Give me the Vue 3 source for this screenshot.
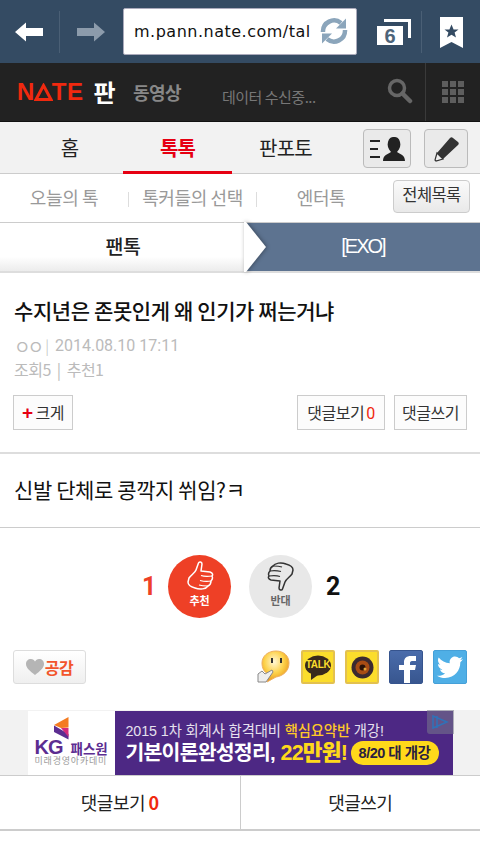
<script setup>
const mainTabs = [
  { label: '홈', on: false },
  { label: '톡톡', on: true },
  { label: '판포토', on: false },
]
const thumb = 'M3 17C5 14 9 12 10 9L12.500 2C13 .5 16 .5 16 3L15 10 24 11C27 12 27 14 26 15C27 17 26 19 25 20C25 22 24 24 22 25C20 28 14 29 9 27C5 26 2 24 2 21Z'
const fingers = 'M15 14.500C18 15.500 22 15.500 26 15M14 19.500C18 20.500 22 20.500 25 20M13 24C16 25 19 25 22 25'
</script>

<template>
  <div class="page">
    <header class="browser">
      <div class="nav-btn">
        <svg width="32" height="22" viewBox="0 0 32 22"><path d="M1 11 12 1.500V7H29V15H12V20.500Z" fill="#fff" /></svg>
      </div>
      <div class="nav-btn fwd">
        <svg width="32" height="22" viewBox="0 0 32 22"><path d="M31 11 20 1.500V7H3V15H20V20.500Z" fill="#8c9bab" /></svg>
      </div>
      <div class="address">
        <span class="url">m.pann.nate.com/tal</span>
        <svg class="reload" width="28" height="28" viewBox="0 0 28 28">
          <g>
            <path d="M3 15A11 11 0 0 1 21 6" fill="none" stroke="#8ba5bb" stroke-width="4.500" />
            <path d="M26 1.500V11.500H16Z" fill="#8ba5bb" />
          </g>
          <g transform="rotate(180 14 14)">
            <path d="M3 15A11 11 0 0 1 21 6" fill="none" stroke="#8ba5bb" stroke-width="4.500" />
            <path d="M26 1.500V11.500H16Z" fill="#8ba5bb" />
          </g>
        </svg>
      </div>
      <div class="tabs-btn">
        <svg width="36" height="28" viewBox="0 0 36 28"><path d="M8 1H35V20H32V4H8Z" fill="#fff" /><rect x="1" y="8" width="26" height="19" fill="#fff" /></svg>
        <span class="tab-count">6</span>
      </div>
      <div class="mark-btn">
        <svg width="23" height="31" viewBox="0 0 23 31"><path d="M0 0H23V31L11.500 25 0 31Z" fill="#fff" /><path d="M11.500 7.500 13.600 12.500H18.500L14.600 15.600 16 20.500 11.500 17.700 7 20.500 8.400 15.600 4.500 12.500H9.400Z" fill="#344b63" /></svg>
      </div>
    </header>

    <div class="nate-bar">
      <div class="logo">
        <span class="nate">N<svg class="delta" width="19" height="18" viewBox="0 0 19 18"><path d="M9.500 2.500 17 16.500H2Z" fill="none" stroke="#f0290f" stroke-width="3" /></svg>TE</span>
        <span class="pan">판</span>
      </div>
      <span class="video">동영상</span>
      <span class="ticker">데이터 수신중...</span>
      <svg class="search" width="26" height="26" viewBox="0 0 26 26"><circle cx="10" cy="10" r="7.500" fill="none" stroke="#666" stroke-width="3.500" /><path d="M15.500 15.500 23 23" stroke="#666" stroke-width="4.500" stroke-linecap="round" /></svg>
      <div class="grid-btn">
        <i v-for="n in 9" :key="n"></i>
      </div>
    </div>

    <nav class="main-tabs">
      <a v-for="t in mainTabs" :key="t.label" class="main-tab" :class="{ on: t.on }">{{ t.label }}</a>
      <div class="tool-btns">
        <span class="tool wide">
          <svg width="36" height="26" viewBox="0 0 36 26">
            <path d="M1 5H11M1 13H9M1 21H11" stroke="#222" stroke-width="2" />
            <path d="M14 25C14 19 19 18 22 16C19 13 18 9 19 6C20 2 22 1 25 1C28 1 30 2 31 6C32 9 31 13 28 16C31 18 36 19 36 25Z" fill="#222" />
          </svg>
        </span>
        <span class="tool">
          <svg width="26" height="26" viewBox="0 0 26 26">
            <path d="M17 2C18 1 19 1 20 2L25 6C26 7 26 8 25 9L10 23 3 25 2 24 4 17Z" fill="#333" />
            <path d="M4 17 10 23 3 25 2 24Z" fill="#eee" stroke="#333" stroke-width="1.200" />
          </svg>
        </span>
      </div>
    </nav>

    <nav class="sub-tabs">
      <a class="sub first">오늘의 톡</a>
      <i class="sub-sep"></i>
      <a class="sub second">톡커들의 선택</a>
      <i class="sub-sep"></i>
      <a class="sub third">엔터톡</a>
      <span class="all-btn">전체목록</span>
    </nav>

    <div class="crumbs">
      <div class="crumb-left">팬톡</div>
      <div class="crumb-right">[EXO]</div>
      <svg class="crumb-arrow" width="22" height="50" viewBox="0 0 22 50"><path d="M0 0 20 25 0 50H-2V0Z" fill="#fff" /></svg>
    </div>

    <article class="post">
      <h1 class="title">수지년은 존못인게 왜 인기가 쩌는거냐</h1>
      <div class="meta"><span class="nick">ㅇㅇ</span><span class="bar">|</span><span class="date">2014.08.10 17:11</span></div>
      <div class="stats">조회5<span class="bar2">|</span>추천1</div>
      <div class="actions">
        <span class="box small"><b class="plus">+</b>크게</span>
        <span class="spacer"></span>
        <span class="box view">댓글보기<em>0</em></span>
        <span class="box write">댓글쓰기</span>
      </div>
    </article>

    <section class="body">신발 단체로 콩깍지 쒸임?ㅋ</section>

    <section class="votes">
      <span class="count red">1</span>
      <div class="vote up">
        <svg width="28" height="30" viewBox="0 0 28 30">
          <path :d="thumb" fill="none" stroke="#fff" stroke-width="1.500" stroke-linejoin="round" />
          <path :d="fingers" fill="none" stroke="#fff" stroke-width="1.200" />
        </svg>
        <span>추천</span>
      </div>
      <div class="vote down">
        <svg width="28" height="30" viewBox="0 0 28 30">
          <g transform="rotate(180 14 15)">
            <path :d="thumb" fill="none" stroke="#333" stroke-width="1.500" stroke-linejoin="round" />
            <path :d="fingers" fill="none" stroke="#333" stroke-width="1.200" />
          </g>
        </svg>
        <span>반대</span>
      </div>
      <span class="count">2</span>
    </section>

    <section class="share">
      <span class="like">
        <svg width="18" height="16" viewBox="0 0 18 16"><path d="M9 16C4 12 0 9 0 5C0 2 2 0 5 0C7 0 8 1 9 2.500C10 1 11 0 13 0C16 0 18 2 18 5C18 9 14 12 9 16Z" fill="#b5b5b5" /></svg>공감
      </span>
      <span class="spacer"></span>
      <svg class="bubble" width="33" height="34" viewBox="0 0 33 34">
        <defs>
          <radialGradient id="bub" cx="0.450" cy="0.350" r="0.650"><stop offset="0" stop-color="#fff8d8" /><stop offset="0.550" stop-color="#fdd24a" /><stop offset="1" stop-color="#e8951c" /></radialGradient>
        </defs>
        <path d="M19 1C27 1 32 6 32 13C32 21 26 26 19 27L10 32 11 24C7 22 5 18 5 13C5 6 11 1 19 1Z" fill="url(#bub)" stroke="#eeb060" />
        <rect x="14" y="8" width="2" height="5" fill="#333" /><rect x="23" y="8" width="2" height="5" fill="#333" />
        <path d="M1 24 5 21 8 24 15 20 16 22 9 32H1Z" fill="#eee" stroke="#888" />
      </svg>
      <span class="sns kakao">
        <svg width="26" height="25" viewBox="0 0 26 25"><ellipse cx="13" cy="10.500" rx="13" ry="10" fill="#3a2a1c" /><path d="M6 17 6 25 13 20Z" fill="#3a2a1c" /></svg>
        <b>TALK</b>
      </span>
      <span class="sns story">
        <svg width="23" height="23" viewBox="0 0 23 23"><circle cx="11.500" cy="11.500" r="11" fill="#3b2a30" /><circle cx="11.500" cy="11.500" r="7" fill="#a84c14" /><circle cx="11.500" cy="11.500" r="3" fill="#2a1208" /><circle cx="14" cy="13" r="1.500" fill="#e3a53a" /></svg>
      </span>
      <span class="sns fb">
        <svg width="20" height="27" viewBox="0 0 20 27"><path d="M6 27V14H1V9H6V6C6 2 9 0 12.500 0H18V5H14C12.500 5 12 6 12 7V9H18L17 14H12V27Z" fill="#fff" /></svg>
      </span>
      <span class="sns tw">
        <svg width="26" height="22" viewBox="0 0 26 22"><path d="M26 3C25 3.500 24 4 23 4C24 3.300 25 2 25.300 1C24.300 1.600 23.200 2 22 2.300C21 1.200 19.600 .5 18 .5C15 .5 12.600 3 12.600 6C12.600 6.400 12.700 6.800 12.800 7.200C8.300 7 4.300 4.800 1.700 1.500C1.200 2.300 1 3.300 1 4.200C1 6.100 2 7.700 3.400 8.700C2.500 8.700 1.700 8.400 1 8C1 10.800 2.900 13 5.400 13.500C4.500 13.800 3.700 13.800 3 13.600C3.700 15.800 5.700 17.400 8.100 17.400C5.800 19.200 3 20 0 19.700C2.400 21.200 5.200 22 8.200 22C18 22 23.300 13.900 23.300 6.800V6.200C24.400 5.400 25.300 4.300 26 3Z" fill="#fff" /></svg>
      </span>
    </section>

    <aside class="ad-band">
      <div class="ad">
        <div class="ad-logo">
          <svg class="kg-mark" width="15" height="23" viewBox="0 0 15 23"><path d="M0 8 14.500 0V10.500L7 11Z" fill="#f47b20" /><path d="M0 8.500V15L14.500 22.500V17Z" fill="#5c2d91" /><path d="M7 11H14.500V20Z" fill="#d42a7c" /></svg>
          <div class="kg-row"><b>KG</b><span>패스원</span></div>
          <div class="academy">미래경영아카데미</div>
        </div>
        <div class="ad-main">
          <div class="ad-top">2015 1차 회계사 합격대비 <b>핵심요약반</b> 개강!</div>
          <div class="ad-bottom"><span class="ad-head">기본이론완성정리,</span><b>22만원!</b><span class="pill">8/20 대 개강</span></div>
        </div>
        <span class="ad-mark">
          <svg width="18" height="16" viewBox="0 0 18 16"><path d="M2 2 16 8 2 14Z M6 2V14" fill="none" stroke="#2f72b8" stroke-width="1.500" /></svg>
        </span>
      </div>
    </aside>

    <div class="bottom-btns">
      <a class="bottom">댓글보기 <em>0</em></a>
      <a class="bottom">댓글쓰기</a>
    </div>
  </div>
</template>

<style>
html, body { margin: 0; background: #fff; }
</style>

<style scoped>
.page {
  width: 480px;
  height: 853px;
  overflow: hidden;
  background: #fff;
  font-family: "Noto Sans CJK KR", "Liberation Sans", sans-serif;
  color: #222;
}
a, em, i, b { font-style: normal; }

/* browser chrome */
.browser {
  height: 63px;
  box-sizing: border-box;
  background: #344b63;
  display: flex;
  align-items: center;
}
.nav-btn {
  width: 60px;
  height: 42px;
  margin-top: 1px;
  display: flex;
  align-items: center;
  justify-content: center;
  border-right: 1px solid #4a5f75;
  box-sizing: border-box;
}
.nav-btn.fwd { border-right: 0; }
.address {
  width: 234px;
  height: 47px;
  margin-left: 3px;
  box-sizing: border-box;
  background: #fff;
  border-radius: 2px;
  border: 1px solid #aab;
  display: flex;
  align-items: center;
  padding-left: 10px;
  position: relative;
  overflow: hidden;
}
.url {
  font-family: "DejaVu Sans", sans-serif;
  font-size: 16px;
  letter-spacing: 0.5px;
  color: #111;
  white-space: nowrap;
}
.reload { position: absolute; right: 8px; top: 8px; }
.tabs-btn {
  position: relative;
  width: 36px;
  height: 28px;
  margin-left: 19px;
  margin-top: 1px;
}
.tab-count {
  position: absolute;
  left: 1px;
  top: 8px;
  width: 26px;
  text-align: center;
  font: 700 20px/20px "Liberation Sans", sans-serif;
  color: #4d6479;
}
.mark-btn {
  width: 59px;
  height: 42px;
  margin-left: 9px;
  margin-top: 1px;
  border-left: 1px solid #4a5f75;
  box-sizing: border-box;
  display: flex;
  align-items: center;
  justify-content: center;
}

/* nate bar */
.nate-bar {
  height: 59px;
  box-sizing: border-box;
  background: #222;
  border-bottom: 1px solid #111;
  display: flex;
  align-items: center;
  padding-left: 17px;
  position: relative;
}
.logo { display: flex; align-items: center; gap: 10px; width: 116px; }
.nate {
  display: inline-flex;
  align-items: center;
  font: 700 24px/24px "Liberation Sans", sans-serif;
  letter-spacing: 0.5px;
  color: #f0290f;
}
.delta { margin: 0 -1px 0 -1px; }
.pan { font-size: 24px; font-weight: 700; color: #fff; line-height: 28px; }
.video { font-size: 18px; font-weight: 700; color: #888; letter-spacing: -0.5px; width: 89px; }
.ticker { font-size: 15px; color: #777; letter-spacing: -0.5px; width: 161px; margin-top: 9px; }
.search { margin-top: -2px; margin-left: 4px; }
.grid-btn {
  position: absolute;
  right: 0;
  top: 0;
  width: 55px;
  height: 58px;
  border-left: 1px solid #3a3a3a;
  box-sizing: border-box;
  display: grid;
  grid-template-columns: repeat(3, 6px);
  grid-auto-rows: 6px;
  gap: 2px;
  align-content: center;
  justify-content: center;
}
.grid-btn i { background: #5e5e5e; }

/* main tabs */
.main-tabs {
  height: 52px;
  box-sizing: border-box;
  background: #f2f2f2;
  border-bottom: 1px solid #ccc;
  display: flex;
  position: relative;
  padding-left: 16px;
}
.main-tab {
  width: 107px;
  height: 52px;
  box-sizing: border-box;
  padding-top: 11px;
  font-size: 20px;
  line-height: 30px;
  text-align: center;
  letter-spacing: -0.8px;
  color: #222;
}
.main-tab.on { color: #e60012; font-weight: 700; border-bottom: 3px solid #e60012; width: 109px; }
.tool-btns {
  margin-left: auto;
  margin-right: 12px;
  margin-top: 7px;
  display: flex;
  gap: 13px;
}
.tool {
  height: 39px;
  width: 44px;
  box-sizing: border-box;
  border: 1px solid #bbb;
  border-radius: 4px;
  background: #eaeaea;
  display: flex;
  align-items: center;
  justify-content: center;
}
.tool.wide { width: 48px; }

/* sub tabs */
.sub-tabs {
  height: 49px;
  box-sizing: border-box;
  border-bottom: 1px solid #ccc;
  padding-bottom: 3px;
  display: flex;
  align-items: center;
  position: relative;
  font-size: 18px;
  color: #999;
  letter-spacing: -0.4px;
}
.sub { text-align: center; }
.first { width: 128px; }
.second { width: 127px; }
.third { width: 128px; }
.sub-sep { width: 1px; height: 15px; background: #ddd; margin-top: 6px; }
.all-btn {
  width: 77px;
  height: 33px;
  box-sizing: border-box;
  border: 1px solid #ccc;
  border-radius: 4px;
  background: linear-gradient(#fafafa, #e9e9e9);
  color: #333;
  font-size: 16.500px;
  letter-spacing: -0.6px;
  line-height: 27px;
  text-align: center;
  margin-left: 8px;
  white-space: nowrap;
}

/* breadcrumb */
.crumbs {
  height: 50px;
  box-sizing: border-box;
  display: flex;
  position: relative;
  border-bottom: 2px solid #ddd;
}
.crumb-left {
  width: 246px;
  background: linear-gradient(#fff 70%, #ececec);
  font-size: 19.500px;
  font-weight: 500;
  line-height: 46px;
  text-align: center;
  color: #222;
  letter-spacing: -0.5px;
}
.crumb-right {
  flex: 1;
  background: #5d7390;
  color: #fff;
  font: 20px/46px "Liberation Sans", sans-serif;
  letter-spacing: -2px;
  text-align: center;
}
.crumb-arrow { position: absolute; left: 246px; top: -1px; overflow: visible; filter: drop-shadow(1px 0 2px rgba(0,0,0,.35)); }

/* post */
.post { padding: 22px 13px 22px 14px; border-bottom: 2px solid #ddd; }
.title {
  margin: 0;
  font-size: 21px;
  line-height: 30px;
  font-weight: 500;
  color: #111;
  letter-spacing: -0.4px;
  white-space: nowrap;
}
.meta {
  margin-top: 10px;
  font-size: 15px;
  line-height: 22px;
  color: #bbb;
  display: flex;
  align-items: center;
}
.nick { font-size: 18px; letter-spacing: -3px; margin-right: 2px; }
.bar { margin: 0 6px 0 2px; font-weight: 300; }
.date { font-family: Roboto, sans-serif; font-size: 16px; }
.stats { margin-top: 1px; font-size: 16px; line-height: 22px; color: #bbb; letter-spacing: -0.5px; }
.bar2 { margin: 0 6px; }
.actions { margin-top: 15px; display: flex; gap: 9px; margin-left: -1px; }
.spacer { flex: 1; }
.box {
  height: 35px;
  box-sizing: border-box;
  border: 1px solid #ccc;
  font-size: 16px;
  line-height: 33px;
  letter-spacing: -0.5px;
  background: #fcfcfc;
  color: #333;
  white-space: nowrap;
  text-align: center;
}
.box.small { width: 60px; }
.box.view { width: 88px; }
.box.write { width: 73px; }
.box em { color: #f0290f; margin-left: 2px; font-family: Roboto, sans-serif; }
.plus { color: #e60012; font: 700 19px/20px "Liberation Sans", sans-serif; margin-right: 3px; }

.body {
  height: 74px;
  box-sizing: border-box;
  border-bottom: 1px solid #ccc;
  padding: 20px 14px 0;
  font-size: 21px;
  line-height: 30px;
  color: #111;
  letter-spacing: -0.4px;
}

/* votes */
.votes {
  height: 122px;
  box-sizing: border-box;
  padding-top: 27px;
  display: flex;
  justify-content: center;
  gap: 18px;
}
.count {
  width: 12px;
  font: 700 25px/63px Roboto, sans-serif;
  text-align: center;
  color: #111;
  margin: 0 0 0 -4px;
}
.count.red { color: #ee4026; margin: 0 -4px 0 0; }
.vote {
  width: 63px;
  height: 63px;
  border-radius: 50%;
  display: flex;
  flex-direction: column;
  align-items: center;
  padding-top: 6px;
  box-sizing: border-box;
  font-size: 11px;
  font-weight: 700;
  line-height: 14px;
}
.vote.up { background: #ee4026; color: #fff; }
.vote.down { background: #e8e8e8; color: #666; }
.vote svg { flex: none; }
.vote span { margin-top: 2px; }

/* share */
.share {
  height: 60px;
  box-sizing: border-box;
  padding: 0 13px;
  display: flex;
  align-items: flex-start;
  gap: 10px;
}
.like {
  width: 73px;
  height: 34px;
  box-sizing: border-box;
  border: 1px solid #ddd;
  border-radius: 3px;
  background: linear-gradient(#fff, #efefef);
  display: flex;
  align-items: center;
  justify-content: center;
  gap: 1px;
  color: #f2552c;
  font-size: 16px;
  font-weight: 700;
  letter-spacing: -0.5px;
}
.bubble { margin-right: 1px; }
.sns {
  width: 34px;
  height: 34px;
  box-sizing: border-box;
  border-radius: 2px;
  display: flex;
  align-items: center;
  justify-content: center;
  position: relative;
  overflow: hidden;
}
.kakao, .story { background: #fbdd2c; border: 2px solid #e3c14f; }
.kakao b {
  position: absolute;
  top: 7px;
  left: 0;
  right: 0;
  text-align: center;
  font: 700 10px/11px "Liberation Sans", sans-serif;
  letter-spacing: -0.3px;
  color: #fbdd2c;
}
.fb { background: linear-gradient(#4a6cab, #38568f); border: 1px solid #36548e; align-items: flex-end; padding-left: 3px; }
.tw { background: #4fafe6; border: 1px solid #45a0d8; }

/* ad */
.ad-band {
  height: 66px;
  background: #f2f2f2;
  border-bottom: 1px solid #ccc;
  box-sizing: border-box;
  display: flex;
  justify-content: center;
  padding-top: 1px;
}
.ad {
  width: 425px;
  height: 64px;
  display: flex;
  position: relative;
  background: #4d2884;
  font-family: "Liberation Sans", "Noto Sans CJK KR", sans-serif;
}
.ad-logo {
  width: 87px;
  flex: none;
  background: #fff;
  padding: 6px 0 0 7px;
  box-sizing: border-box;
  color: #5c2d91;
}
.kg-mark { display: block; margin-left: 19px; }
.kg-row { display: flex; align-items: baseline; gap: 8px; font-size: 13.500px; font-weight: 700; line-height: 14px; height: 16px; white-space: nowrap; }
.kg-row b { font: 700 20px/14px "Liberation Sans", sans-serif; letter-spacing: -1px; }
.academy { font-size: 9px; line-height: 11px; color: #999; white-space: nowrap; letter-spacing: .8px; }
.ad-main { flex: 1; padding: 11px 0 0 11px; color: #e6e0ee; white-space: nowrap; }
.ad-top { font-size: 14.300px; line-height: 18px; letter-spacing: -0.1px; }
.ad-top b { color: #ffc928; font-weight: 500; }
.ad-bottom { font-size: 20.500px; line-height: 26px; font-weight: 700; letter-spacing: -0.8px; color: #fff; display: flex; align-items: center; }
.ad-head { width: 155px; flex: none; }
.ad-bottom b { color: #ffd91a; font-size: 21.500px; letter-spacing: -0.8px; width: 70px; flex: none; }
.pill {
  width: 88px;
  height: 24px;
  flex: none;
  border-radius: 12px;
  background: #ffd91a;
  color: #2a2040;
  font-size: 14.500px;
  line-height: 24px;
  letter-spacing: -0.5px;
  text-align: center;
}
.ad-mark {
  position: absolute;
  right: -1px;
  top: -1px;
  width: 27px;
  height: 24px;
  background: rgba(120, 120, 140, .55);
  border-radius: 0 0 0 3px;
  display: flex;
  align-items: center;
  justify-content: center;
}

/* bottom */
.bottom-btns {
  height: 55px;
  box-sizing: border-box;
  display: flex;
  border-bottom: 2px solid #ccc;
}
.bottom {
  flex: 1;
  text-align: center;
  font-size: 18px;
  line-height: 52px;
  letter-spacing: -0.5px;
  color: #222;
}
.bottom + .bottom { border-left: 1px solid #ccc; }
.bottom em { color: #f0290f; font-weight: 700; }
</style>
